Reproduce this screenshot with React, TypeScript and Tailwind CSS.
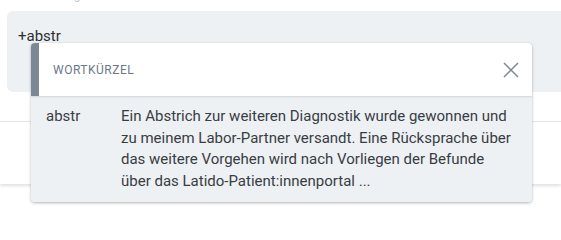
import React from "react";

export default function App() {
  return (
    <div className="relative w-[561px] h-[227px] overflow-hidden bg-white font-['Roboto',sans-serif]">
      <div className="h-[11px] overflow-hidden">
        <div className="-mt-[12px] pl-[19px] text-[12px] leading-[14px] text-[#c3cad1]">Anmerkung</div>
      </div>
      <div className="ml-[7px] h-[81px] rounded-l-[6px] bg-[#eef1f4] pl-[11px] pt-[15px] text-[15px] leading-[20px] text-[#2b2f33]">
        +abstr
      </div>
      <div className="mt-[29px] h-[63px] border-t border-[#e4e7ea] bg-white shadow-[0_2px_3px_rgba(0,0,0,0.12)]"></div>

      <div className="absolute left-[31px] top-[43px] w-[501px] rounded-[4px] shadow-[0_1px_3px_rgba(0,0,0,0.3)] overflow-hidden">
        <div className="flex h-[53px] items-center justify-between rounded-tr-[4px] border-l-[8px] border-[#7c8995] bg-white pl-[14px] pr-[13px] shadow-[0_1px_2px_rgba(0,0,0,0.12)] relative z-10">
          <span className="text-[12px] font-normal tracking-[0.5px] text-[#6b7986]">WORTKÜRZEL</span>
          <svg width="16" height="16" viewBox="0 0 16 16" className="text-[#7d8893]">
            <path d="M1 1 L15 15 M15 1 L1 15" stroke="currentColor" strokeWidth="1.5" fill="none" />
          </svg>
        </div>
        <div className="flex bg-[#eef1f4] pl-[15px] pt-[10px] pb-[10px] text-[15px] leading-[21.5px] text-[#383d43]">
          <div className="w-[75px] shrink-0">abstr</div>
          <div className="whitespace-nowrap">
            Ein Abstrich zur weiteren Diagnostik wurde gewonnen und<br />
            zu meinem Labor-Partner versandt. Eine Rücksprache über<br />
            das weitere Vorgehen wird nach Vorliegen der Befunde<br />
            über das Latido-Patient:innenportal ...
          </div>
        </div>
      </div>
    </div>
  );
}
